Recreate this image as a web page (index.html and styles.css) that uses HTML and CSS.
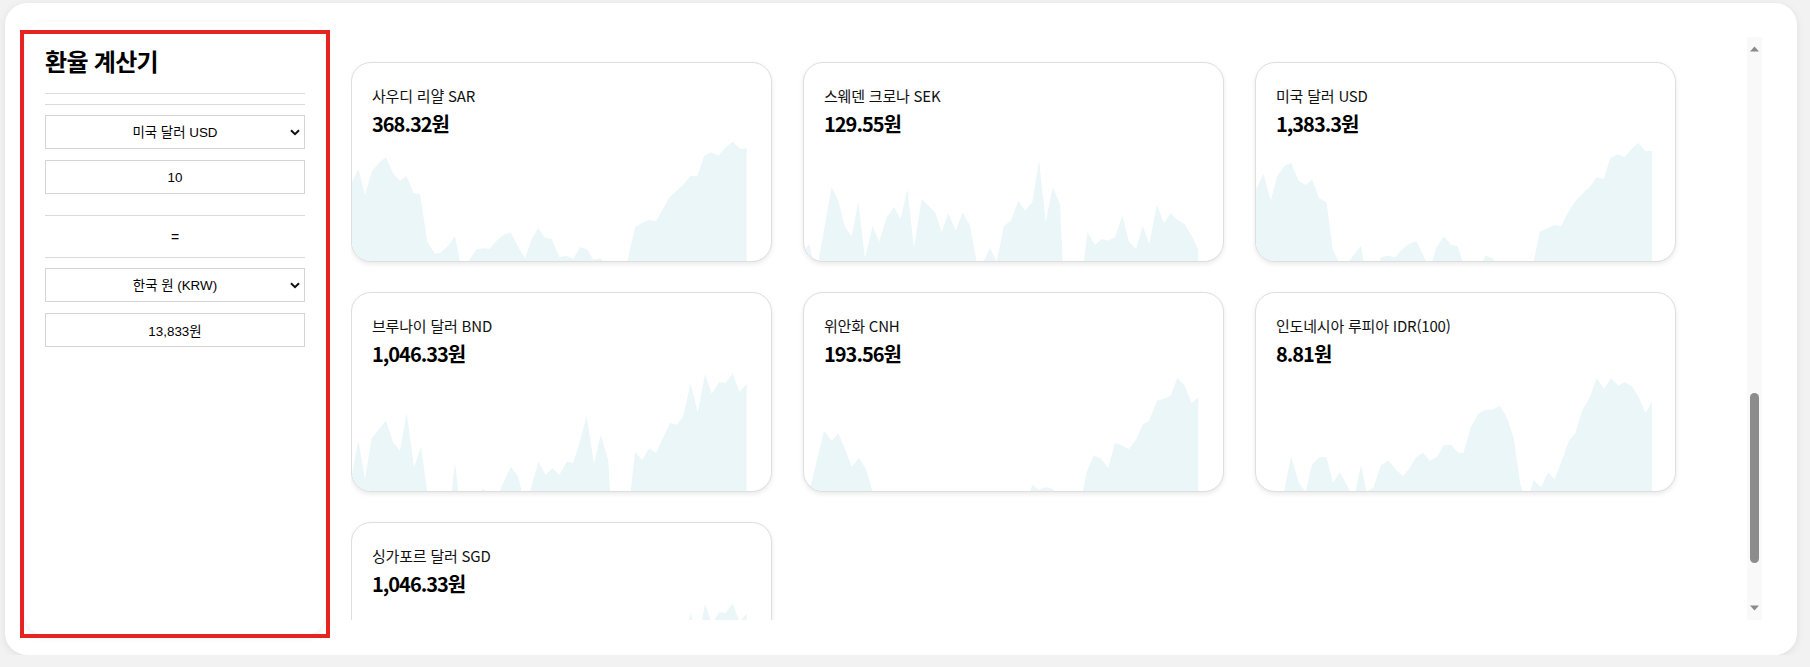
FILE: index.html
```html
<!DOCTYPE html>
<html lang="ko">
<head>
<meta charset="utf-8">
<title>환율 계산기</title>
<link rel="stylesheet" href="styles.css">
</head>
<body>
<div class="page">
  <aside class="calc">
    <h2 class="calc-title">환율 계산기</h2>
    <div class="rule rule-a"></div>
    <div class="rule rule-b"></div>
    <div class="select-wrap sel-1">
      <select class="field"><option>미국 달러 USD</option></select>
      <svg class="chev" width="10" height="7" viewBox="0 0 10 7"><path d="M1 1.2 L5 5.2 L9 1.2" fill="none" stroke="#111" stroke-width="2"/></svg>
    </div>
    <input class="field inp-1" type="text" value="10">
    <div class="rule rule-c"></div>
    <div class="equals">=</div>
    <div class="rule"></div>
    <div class="select-wrap sel-2">
      <select class="field"><option>한국 원 (KRW)</option></select>
      <svg class="chev" width="10" height="7" viewBox="0 0 10 7"><path d="M1 1.2 L5 5.2 L9 1.2" fill="none" stroke="#111" stroke-width="2"/></svg>
    </div>
    <input class="field inp-2" type="text" value="13,833원" readonly>
  </aside>

  <div class="annot"></div>

  <main class="rates">
    <div class="viewport">
      <div class="grid">
        <div class="card">
          <svg class="chart" viewBox="1 1 419 198" preserveAspectRatio="none"><polygon points="0,200 0,122 7.3,107 14,133 20.7,109.7 28.3,100.3 35,95.3 42.3,112 49,118.7 55.7,113.7 62.3,131 69,132 76.3,179.7 84,192 89,191 97.3,183.7 104,174.3 109,200 117.3,200 125.7,187 132.3,186.3 138.3,187 145.7,178.7 152.3,173 159.7,170.3 167.3,185.3 174,196.3 180.7,177 187.3,166.3 194,175.7 200.7,177 208.3,195.3 215.7,193.7 222.3,197 229,185.3 235.7,187 242.3,197.7 249.7,196.3 252.3,200 276.3,200 284,165.3 290.7,161 298.3,158 305,159.3 312.3,146.3 319,134.7 325.7,128.7 333,122 339.7,113.7 346.3,114.3 353,94.3 359.7,90.3 367.3,93.7 374.7,85.3 381.7,79.7 389,87 395.7,86.3 395.7,200"/></svg>
          <div class="card-text"><div class="cur-name">사우디 리얄 SAR</div><div class="cur-price">368.32원</div></div>
        </div>
        <div class="card">
          <svg class="chart" viewBox="1 1 419 198" preserveAspectRatio="none"><polygon points="0,200 0,190 6.3,182 10.3,200 15.3,200 28.7,124.7 35.3,138.7 42,165.3 48.7,174.3 55.3,140.3 62,196 69.7,164.3 76.3,179.7 83.7,155.3 91,145.3 97.7,157 104.3,127 111,186.3 118.7,137 125.3,143.7 132,150.3 138.7,170.3 145.3,151.3 152.7,168.7 159.7,150.3 167,163.7 173.7,200 180.3,200 187,186 193.7,200 201,163.7 208,158.7 215.3,138.7 222,148.7 229.3,140.3 236,98.7 242.7,160.3 249.7,125.3 257,142 259.7,200 281,200 284.3,170.3 292,183 298.7,177 305.3,178.7 312,175.3 319.3,153.7 326,179.7 333,187 339.7,163.7 346.3,182 353.7,143 361,161 367.7,151 374.3,157.7 381.3,162 388.7,173.7 395.3,188 395.3,200"/></svg>
          <div class="card-text"><div class="cur-name">스웨덴 크로나 SEK</div><div class="cur-price">129.55원</div></div>
        </div>
        <div class="card">
          <svg class="chart" viewBox="1 1 419 198" preserveAspectRatio="none"><polygon points="0,200 1.3,127 8.5,112 15.8,138.7 22.4,113.7 29.6,103.7 36.2,101 43.5,118.7 50.7,123 57.3,117.7 64.2,136.3 71.5,140.3 77.6,187 83.5,200 93.3,200 106,183.7 108.5,200 124.2,200 126,195.3 133.3,193.7 140.5,195.3 146.7,187.7 154,182 161.3,179.3 171.5,200 177,200 181.6,185.3 188.9,174.3 196.2,183 202.4,184.3 207.8,200 227.8,200 230.4,193.7 237.6,196.3 240.5,200 278.7,200 284.9,169.7 292.2,166.3 299.5,163 306,164.3 313.3,150.3 319.8,139.7 327.1,132 334.4,125.3 341.6,115.3 348.9,117 355.1,96.3 362.4,92.3 369.6,95.3 375.8,87.7 383.1,81 390.4,89.3 396.9,89 396.9,200"/></svg>
          <div class="card-text"><div class="cur-name">미국 달러 USD</div><div class="cur-price">1,383.3원</div></div>
        </div>
        <div class="card">
          <svg class="chart" viewBox="1 1 419 198" preserveAspectRatio="none"><polygon points="0,200 0,187 7.3,148.7 14,187 20.7,146.3 28.3,137 35,128.7 42.3,151 49,158.7 55.7,121 63,175.3 70,154.7 76.3,200 100.7,200 104,170.3 107.3,200 129,200 132.3,197 135.7,200 148.3,200 159.7,174.7 167.3,184.7 170.7,200 179,200 187.3,169.7 194.7,183 201.3,176.3 208.3,183 215.7,169.7 222.3,171 229,148.7 235.7,123.7 243,172 249.7,142.7 257.3,168.7 259,200 279.7,200 284,159.7 291.3,168 298.3,156.3 305,161 312.3,145.3 319,131 325.7,132.7 332.3,124.3 339.7,91.3 346.7,120.3 354,82 360.7,102 368,90.3 374.7,91 381.7,81.3 388.3,99.7 395.7,92 395.7,200"/></svg>
          <div class="card-text"><div class="cur-name">브루나이 달러 BND</div><div class="cur-price">1,046.33원</div></div>
        </div>
        <div class="card">
          <svg class="chart" viewBox="1 1 419 198" preserveAspectRatio="none"><polygon points="0,200 6.3,200 21,138.7 28.7,148.7 35.3,141 42,157 48.7,174.7 56,166.3 63,177 69.7,200 227,200 229.3,192.7 235.3,197.7 242.7,195.3 250.3,197 251,200 279.7,200 283.7,180.3 290.3,163.7 297.7,166.3 305.3,176 312,151 319.3,153.7 326,157 333,147.7 339.7,132.7 346.3,128.7 353.7,108.7 360.3,107 367.7,103.7 374.3,86.3 381.3,93 388.7,111 395.3,105.3 395.3,200"/></svg>
          <div class="card-text"><div class="cur-name">위안화 CNH</div><div class="cur-price">193.56원</div></div>
        </div>
        <div class="card">
          <svg class="chart" viewBox="1 1 419 198" preserveAspectRatio="none"><polygon points="0,200 28.9,200 36.2,164.3 43.5,190.3 50.7,200 56.9,173 64.2,165.3 71.5,165.3 78,191 84.9,180.3 92.2,193.7 95.1,200 100.5,200 106,173 111.5,200 118.7,195.3 126,173 133.3,168.7 140.5,177 147.8,184.3 154,177 161.3,165.3 167.8,161 175.1,168.7 182.4,164.3 188.9,153 196.2,153 203.5,161 208.5,161 215.8,135.3 223.1,122 230.4,117.7 237.6,117.7 244.9,113.7 252.2,126.3 258.7,146.3 265.3,192 267.8,200 275.1,200 278.7,188 286,195.3 293.3,180.3 299.5,187.7 306.7,168.7 314,148.7 320.5,141 327.1,118.7 334.4,106.3 341.6,86.3 348.9,97 356.2,86.3 363.5,93.7 369.6,90.3 376.9,94.3 384.2,106.3 390.4,121 396.9,109.7 396.9,200"/></svg>
          <div class="card-text"><div class="cur-name">인도네시아 루피아 IDR(100)</div><div class="cur-price">8.81원</div></div>
        </div>
        <div class="card">
          <svg class="chart" viewBox="1 1 419 198" preserveAspectRatio="none"><polygon points="0,200 0,187 7.3,148.7 14,187 20.7,146.3 28.3,137 35,128.7 42.3,151 49,158.7 55.7,121 63,175.3 70,154.7 76.3,200 100.7,200 104,170.3 107.3,200 129,200 132.3,197 135.7,200 148.3,200 159.7,174.7 167.3,184.7 170.7,200 179,200 187.3,169.7 194.7,183 201.3,176.3 208.3,183 215.7,169.7 222.3,171 229,148.7 235.7,123.7 243,172 249.7,142.7 257.3,168.7 259,200 279.7,200 284,159.7 291.3,168 298.3,156.3 305,161 312.3,145.3 319,131 325.7,132.7 332.3,124.3 339.7,91.3 346.7,120.3 354,82 360.7,102 368,90.3 374.7,91 381.7,81.3 388.3,99.7 395.7,92 395.7,200"/></svg>
          <div class="card-text"><div class="cur-name">싱가포르 달러 SGD</div><div class="cur-price">1,046.33원</div></div>
        </div>
      </div>
    </div>
    <div class="scrollbar">
      <div class="sb-btn"><svg width="9" height="6" viewBox="0 0 9 6"><polygon points="0,5.5 4.5,0.5 9,5.5" fill="#8a8a8a"/></svg></div>
      <div class="sb-track"><div class="sb-thumb"></div></div>
      <div class="sb-btn"><svg width="9" height="6" viewBox="0 0 9 6"><polygon points="0,0.5 4.5,5.5 9,0.5" fill="#8a8a8a"/></svg></div>
    </div>
  </main>
</div>
</body>
</html>
```

FILE: styles.css
```css
* { box-sizing: border-box; }

html, body {
  margin: 0;
  background: #f2f2f2;
}

body {
  padding: 3px 0 0 5px;
  font-family: "Noto Sans CJK KR", "Noto Sans", sans-serif;
  color: #111;
}

.page {
  position: relative;
  width: 1792px;
  height: 652px;
  background: #fff;
  border-radius: 22px;
  box-shadow: 0 2px 8px rgba(0, 0, 0, 0.08);
  display: flex;
  align-items: stretch;
  gap: 26px;
  padding: 19px 35px 20px 20px;
}

/* ---------- calculator sidebar ---------- */
.calc {
  width: 300px;
  flex: none;
  background: #fff;
  border-radius: 20px;
  box-shadow: 0 2px 8px rgba(0, 0, 0, 0.07);
  padding: 22px 20px 20px;
  display: flex;
  flex-direction: column;
}

.calc-title {
  margin: 0 0 15px;
  font-size: 24px;
  line-height: 34px;
  font-weight: 700;
  letter-spacing: -0.7px;
  color: #000;
}

.rule {
  height: 1px;
  background: #dadada;
  flex: none;
}

.rule-b { margin-top: 10px; }

.select-wrap {
  display: grid;
  height: 34px;
  margin-top: 10px;
}

.select-wrap > * { grid-area: 1 / 1; }

.field {
  width: 100%;
  height: 34px;
  border: 1px solid #d5d5d5;
  border-radius: 0;
  background: #fff;
  font-family: "Liberation Sans", "Noto Sans CJK KR", sans-serif;
  font-size: 13.4px;
  color: #000;
  text-align: center;
  text-align-last: center;
  padding: 0 4px;
  outline: none;
}

select.field {
  -webkit-appearance: none;
  appearance: none;
}

.chev {
  justify-self: end;
  align-self: center;
  margin-right: 5px;
  pointer-events: none;
}

.inp-1, .inp-2 { margin-top: 11px; flex: none; }

.rule-c { margin-top: 21px; }

.equals {
  height: 41px;
  display: flex;
  align-items: center;
  justify-content: center;
  font-family: "Liberation Sans", sans-serif;
  font-size: 14px;
  color: #000;
}

/* ---------- annotation box ---------- */
.annot {
  position: absolute;
  left: 15px;
  top: 27px;
  width: 310px;
  height: 608px;
  border: 4px solid #e52421;
  pointer-events: none;
}

/* ---------- rates area ---------- */
.rates {
  flex: 1;
  align-self: center;
  height: 583px;
  display: flex;
  min-width: 0;
}

.viewport {
  flex: 1;
  overflow: hidden;
  padding-top: 25px;
}

.grid {
  display: grid;
  grid-template-columns: repeat(3, 421px);
  grid-auto-rows: 200px;
  column-gap: 31px;
  row-gap: 30px;
}

.card {
  display: grid;
  background: #fff;
  border: 1px solid #dedede;
  border-radius: 20px;
  box-shadow: 0 2px 5px rgba(0, 0, 0, 0.09);
  overflow: hidden;
}

.card > * { grid-area: 1 / 1; }

.chart {
  width: 100%;
  height: 100%;
  display: block;
}

.chart polygon { fill: #eaf6f7; }

.card-text {
  padding: 21px 20px 0;
  align-self: start;
}

.cur-name {
  font-size: 15px;
  line-height: 24px;
  letter-spacing: -0.2px;
  color: #111;
}

.cur-price {
  margin-top: 2px;
  font-size: 20px;
  line-height: 28px;
  font-weight: 700;
  letter-spacing: -1px;
  color: #000;
}

/* ---------- scrollbar ---------- */
.scrollbar {
  width: 15px;
  flex: none;
  background: #f9f9f9;
  display: flex;
  flex-direction: column;
}

.sb-btn {
  height: 24px;
  display: flex;
  align-items: center;
  justify-content: center;
}

.sb-track { flex: 1; }

.sb-thumb {
  margin: 332px auto 0;
  width: 9px;
  height: 170px;
  border-radius: 5px;
  background: #8c8c8c;
}
```
